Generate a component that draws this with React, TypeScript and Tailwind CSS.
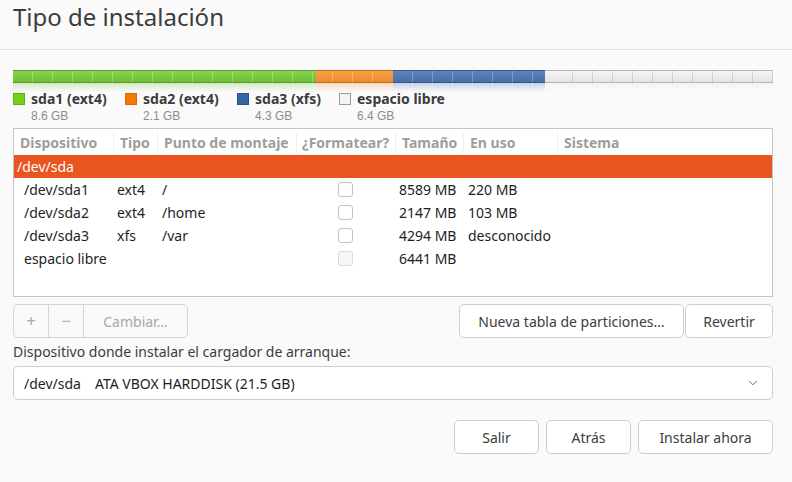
import { ChevronDown } from "lucide-react";

const segments = [
  {
    key: "sda1",
    w: "w-[303px]",
    fill: "bg-[linear-gradient(#86d44e,#6fbd35)] border-[#5a9c2a]",
    ticks: "bg-[repeating-linear-gradient(90deg,transparent_0,transparent_19px,rgba(255,255,255,0.28)_19px,rgba(255,255,255,0.28)_20px)] bg-[position:0_0]",
  },
  {
    key: "sda2",
    w: "w-[77px]",
    fill: "bg-[linear-gradient(#f8a049,#ec8a2c)] border-[#c76a14]",
    ticks: "bg-[repeating-linear-gradient(90deg,transparent_0,transparent_19px,rgba(255,255,255,0.28)_19px,rgba(255,255,255,0.28)_20px)] bg-[position:-3px_0]",
  },
  {
    key: "sda3",
    w: "w-[152px]",
    fill: "bg-[linear-gradient(#5e84bd,#4a6ea5)] border-[#34578a]",
    ticks: "bg-[repeating-linear-gradient(90deg,transparent_0,transparent_19px,rgba(255,255,255,0.25)_19px,rgba(255,255,255,0.25)_20px)] bg-[position:0_0]",
  },
  {
    key: "libre",
    w: "flex-1",
    fill: "bg-[linear-gradient(#f6f6f6,#e3e3e3)] border-[#b5b5b5]",
    ticks: "bg-[repeating-linear-gradient(90deg,transparent_0,transparent_19px,rgba(0,0,0,0.12)_19px,rgba(0,0,0,0.12)_20px)] bg-[position:8px_0]",
  },
];

const legend = [
  { name: "sda1 (ext4)", size: "8.6 GB", w: "w-[112px]", swatch: "bg-[#73d216] border-[#5fb010]" },
  { name: "sda2 (ext4)", size: "2.1 GB", w: "w-[112px]", swatch: "bg-[#f57900] border-[#d86a00]" },
  { name: "sda3 (xfs)", size: "4.3 GB", w: "w-[102px]", swatch: "bg-[#3465a4] border-[#2a5288]" },
  { name: "espacio libre", size: "6.4 GB", w: "", swatch: "bg-[#f4f4f4] border-[#9a9a9a]" },
];

const rows = [
  { dev: "/dev/sda1", type: "ext4", mount: "/", size: "8589 MB", used: "220 MB" },
  { dev: "/dev/sda2", type: "ext4", mount: "/home", size: "2147 MB", used: "103 MB" },
  { dev: "/dev/sda3", type: "xfs", mount: "/var", size: "4294 MB", used: "desconocido" },
  { dev: "espacio libre", type: "", mount: "", size: "6441 MB", used: "", free: true },
];

const cols = "grid grid-cols-[99px_44px_139px_99px_68px_94px_1fr]";

function Bar({ reflect }: { reflect?: boolean }) {
  return (
    <div className="flex h-[13px]">
      {segments.map((s) => (
        <div
          key={s.key}
          className={`${s.w} ${s.fill} ${reflect ? "" : "border-t border-b"} relative h-full`}
        >
          <div className={`absolute inset-0 ${s.ticks}`} />
        </div>
      ))}
    </div>
  );
}

function Button({ label, className }: { label: string; className?: string }) {
  return (
    <button
      className={`h-[34px] rounded-[5px] border border-[#cdcdcd] bg-white text-[14px] text-[#3c3c3c] ${className ?? ""}`}
    >
      {label}
    </button>
  );
}

export default function App() {
  return (
    <div className="h-[482px] w-[792px] overflow-hidden bg-[#fafafa] font-['Noto_Sans',sans-serif] text-[#3c3c3c]">
      <div className="h-[50px] border-b border-[#dedede] pl-[13px]">
        <h1 className="pt-[1px] text-[24px] leading-[32px] font-normal text-[#3c3c3c]">
          Tipo de instalación
        </h1>
      </div>

      <div className="pr-[19px] pl-[13px]">
        <div className="mt-[20px]">
          <Bar />
          <div className="h-[9px] overflow-hidden opacity-30 [mask-image:linear-gradient(to_bottom,black,transparent)]">
            <div className="-scale-y-100">
              <Bar reflect />
            </div>
          </div>
        </div>

        <div className="-mt-[1px] flex">
          {legend.map((l) => (
            <div key={l.name} className={`flex items-start gap-[6px] ${l.w}`}>
              <div className={`mt-[2px] h-[12px] w-[12px] shrink-0 border ${l.swatch}`} />
              <div className="flex flex-col">
                <span className="text-[14px] leading-[16px] font-bold text-[#3c3c3c]">{l.name}</span>
                <span className="mt-[2px] font-['Liberation_Sans',sans-serif] text-[12px] leading-[15px] text-[#8c8c8c]">
                  {l.size}
                </span>
              </div>
            </div>
          ))}
        </div>

        <div className="mt-[4px] h-[169px] border border-[#c4c4c4] bg-white">
          <div className={`${cols} h-[26px] items-center text-[14px] font-bold text-[#9d9d9d]`}>
            <div className="pl-[6px]">Dispositivo</div>
            <div className="border-l border-[#f0f0f0] pl-[6px]">Tipo</div>
            <div className="border-l border-[#f0f0f0] pl-[6px]">Punto de montaje</div>
            <div className="border-l border-[#f0f0f0] pl-[5px]">¿Formatear?</div>
            <div className="border-l border-[#f0f0f0] pl-[6px]">Tamaño</div>
            <div className="border-l border-[#f0f0f0] pl-[6px]">En uso</div>
            <div className="border-l border-[#f0f0f0] pl-[6px]">Sistema</div>
          </div>
          <div className="flex h-[23px] items-center bg-[#e95420] pl-[3px] text-[14px] text-white">
            /dev/sda
          </div>
          {rows.map((r) => (
            <div key={r.dev} className={`${cols} h-[23px] items-center text-[14px] text-[#1e1e1e]`}>
              <div className="pl-[10px]">{r.dev}</div>
              <div className="pl-[4px]">{r.type}</div>
              <div className="pl-[5px]">{r.mount}</div>
              <div className="flex justify-center">
                <div
                  className={`h-[15px] w-[15px] rounded-[3px] border ${r.free ? "border-[#dadada] bg-[#f7f7f7]" : "border-[#c2c2c2] bg-white"}`}
                />
              </div>
              <div className="pl-[4px]">{r.size}</div>
              <div className="pl-[5px]">{r.used}</div>
              <div />
            </div>
          ))}
        </div>

        <div className="mt-[7px] flex items-center">
          <div className="flex h-[34px] w-[175px] rounded-[5px] border border-[#d5d5d5] text-[14px] text-[#a8a8a8]">
            <div className="flex w-[35px] items-center justify-center border-r border-[#d5d5d5] text-[17px]">+</div>
            <div className="flex w-[35px] items-center justify-center border-r border-[#d5d5d5] text-[17px]">−</div>
            <div className="flex flex-1 items-center justify-center">Cambiar…</div>
          </div>
          <div className="ml-auto flex gap-[1px]">
            <Button label="Nueva tabla de particiones…" className="w-[225px]" />
            <Button label="Revertir" className="w-[88px]" />
          </div>
        </div>

        <div className="mt-[4px] text-[14px] leading-[20px] text-[#3c3c3c]">
          Dispositivo donde instalar el cargador de arranque:
        </div>

        <div className="mt-[4px] flex h-[34px] items-center rounded-[5px] border border-[#cdcdcd] bg-white pr-[12px] pl-[10px] text-[14px] text-[#1e1e1e]">
          <span>/dev/sda</span>
          <span className="ml-[14px]">ATA VBOX HARDDISK (21.5 GB)</span>
          <ChevronDown className="ml-auto h-[14px] w-[14px] text-[#5a5a5a]" strokeWidth={1.5} />
        </div>

        <div className="mt-[20px] flex justify-end gap-[7px]">
          <Button label="Salir" className="w-[85px]" />
          <Button label="Atrás" className="w-[85px]" />
          <Button label="Instalar ahora" className="w-[135px]" />
        </div>
      </div>
    </div>
  );
}
